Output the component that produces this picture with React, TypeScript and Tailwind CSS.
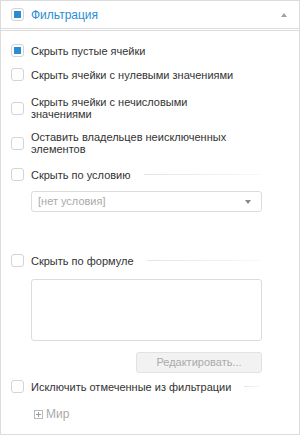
import React from "react";

const Box = ({ checked }: { checked?: boolean }) => (
  <div className="w-[13px] h-[13px] shrink-0 rounded-[3px] border border-[#d4d4d4] bg-white flex items-center justify-center">
    {checked && <div className="w-[7px] h-[7px] bg-[#2a8dd4]" />}
  </div>
);

const Row = ({ label, checked, cls = "" }: { label: React.ReactNode; checked?: boolean; cls?: string }) => (
  <div className={"flex items-center gap-[7px] " + cls}>
    <Box checked={checked} />
    <div className="leading-[12px]">{label}</div>
  </div>
);

const LineRow = ({ label, cls = "" }: { label: string; cls?: string }) => (
  <div className={"flex items-center gap-[7px] pr-[39px] " + cls}>
    <Box />
    <div className="leading-[12px] whitespace-nowrap">{label}</div>
    <div className="flex-1 h-px bg-gradient-to-r from-[#e4e4e4] to-[#f8f8f8] ml-[6px]" />
  </div>
);

export default function App() {
  return (
    <div
      className="w-[301px] h-[436px] bg-white text-[#333] text-[11px]"
      style={{ fontFamily: '"Liberation Sans", Arial, sans-serif' }}
    >
      <div className="w-[300px] h-[435px] border border-[#dcdcdc] flex flex-col">
        <div className="h-[28px] border-b border-[#dcdcdc] flex items-center pl-[10px] pr-[12px] shrink-0">
          <Box checked />
          <div className="ml-[7px] text-[#2a8dd4] text-[12px]">Фильтрация</div>
          <div className="ml-auto w-0 h-0 border-l-[3px] border-r-[3px] border-b-[4px] border-l-transparent border-r-transparent border-b-[#a0a0a0]" />
        </div>
        <div className="h-[2px] border-b border-[#dcdcdc] shrink-0" />
        <div className="pl-[10px] flex flex-col">
          <Row checked label="Скрыть пустые ячейки" cls="mt-[13px]" />
          <Row label="Скрыть ячейки с нулевыми значениями" cls="mt-[11px]" />
          <Row label={<span className="block leading-[12px]">Скрыть ячейки с нечисловыми<br />значениями</span>} cls="mt-[15px]" />
          <Row label={<span className="block leading-[12px]">Оставить владельцев неисключенных<br />элементов</span>} cls="mt-[11px]" />
          <LineRow label="Скрыть по условию" cls="mt-[13px]" />
          <div className="ml-[20px] mt-[10px] w-[231px] h-[21px] border border-[#dcdcdc] rounded-[3px] flex items-center pl-[6px] pr-[10px] text-[#aaa]">
            <span>[нет условия]</span>
            <div className="ml-auto w-0 h-0 border-l-[3px] border-r-[3px] border-t-[4px] border-l-transparent border-r-transparent border-t-[#888]" />
          </div>
          <LineRow label="Скрыть по формуле" cls="mt-[42px]" />
          <div className="ml-[20px] mt-[12px] w-[231px] h-[62px] border border-[#dcdcdc] rounded-[3px]" />
          <div className="ml-[125px] mt-[11px] w-[126px] h-[21px] border border-[#e2e2e2] rounded-[3px] bg-[#f2f2f2] flex items-center justify-center text-[#aaa]">
            Редактировать...
          </div>
          <LineRow label="Исключить отмеченные из фильтрации" cls="mt-[7px]" />
          <div className="ml-[23px] mt-[12px] flex items-center gap-[3px] text-[#aaa] text-[12px]">
            <div className="w-[9px] h-[9px] border border-[#bbb] relative">
              <div className="absolute left-[1px] right-[1px] top-[3px] h-px bg-[#999]" />
              <div className="absolute top-[1px] bottom-[1px] left-[3px] w-px bg-[#999]" />
            </div>
            <span>Мир</span>
          </div>
        </div>
      </div>
    </div>
  );
}
